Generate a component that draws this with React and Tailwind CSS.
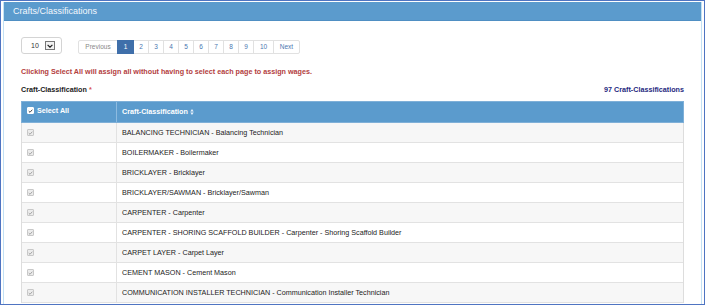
import React from "react";

const rows = [
  "BALANCING TECHNICIAN - Balancing Technician",
  "BOILERMAKER - Boilermaker",
  "BRICKLAYER - Bricklayer",
  "BRICKLAYER/SAWMAN - Bricklayer/Sawman",
  "CARPENTER - Carpenter",
  "CARPENTER - SHORING SCAFFOLD BUILDER - Carpenter - Shoring Scaffold Builder",
  "CARPET LAYER - Carpet Layer",
  "CEMENT MASON - Cement Mason",
  "COMMUNICATION INSTALLER TECHNICIAN - Communication Installer Technician",
];

const pages = [
  { label: "Previous", w: "w-[40px]", muted: true },
  { label: "1", w: "w-[17px]", active: true },
  { label: "2", w: "w-[16px]" },
  { label: "3", w: "w-[16px]" },
  { label: "4", w: "w-[16px]" },
  { label: "5", w: "w-[16px]" },
  { label: "6", w: "w-[16px]" },
  { label: "7", w: "w-[16px]" },
  { label: "8", w: "w-[16px]" },
  { label: "9", w: "w-[16px]" },
  { label: "10", w: "w-[21px]" },
  { label: "Next", w: "w-[27px]" },
];

function Check({ light }) {
  return (
    <span
      className={`flex items-center justify-center w-[7px] h-[7px] rounded-[1px] border ${
        light ? "border-[#c8c8c8] bg-[#ececec]" : "border-white bg-white"
      }`}
    >
      <svg width="6" height="6" viewBox="0 0 10 10">
        <path d="M1.5 5.2 L4 7.6 L8.6 2.4" fill="none" stroke={light ? "#9a9a9a" : "#333"} strokeWidth="1.8" />
      </svg>
    </span>
  );
}

export default function App() {
  return (
    <div className="w-[705px] h-[305px] overflow-hidden bg-white border border-[#4f74c2] font-['Liberation_Sans',Arial,sans-serif]">
      <div className="mx-[2px] mt-[1px] h-[320px] border-x border-[#c3e1f4] bg-white">
        {/* PANEL HEADER */}
        <div className="h-[19px] bg-[#5b9bcd] border-b border-[#4f8fc3] flex items-center pl-[9px]">
          <span className="text-[#f4f8fc] text-[9px] leading-none">Crafts/Classifications</span>
        </div>

        <div className="px-[17px] pt-[16px]">
          {/* PAGE SIZE + PAGINATION */}
          <div className="flex items-start">
            <div className="w-[41px] h-[17px] rounded-[3px] border border-[#d4d4d4] flex items-center pl-[9px] gap-[6px]">
              <span className="text-[7px] text-[#333] leading-none">10</span>
              <span className="w-[10px] h-[9px] border border-[#777] bg-[#f2f2f2] flex items-center justify-center">
                <svg width="6" height="4" viewBox="0 0 10 6">
                  <path d="M1 1 L5 5 L9 1" fill="none" stroke="#222" strokeWidth="2" />
                </svg>
              </span>
            </div>
            <div className="ml-[16px] mt-[3px] flex">
              {pages.map((p, i) => (
                <span
                  key={p.label}
                  className={`${p.w} h-[14px] flex items-center justify-center text-[6.5px] leading-none border ${
                    i > 0 ? "-ml-px" : "rounded-l-[2px]"
                  } ${i === pages.length - 1 ? "rounded-r-[2px]" : ""} ${
                    p.active
                      ? "bg-[#3f6faa] border-[#3f6faa] text-white relative"
                      : p.muted
                      ? "border-[#e1e1e1] text-[#888] bg-white"
                      : "border-[#e1e1e1] text-[#4a76b0] bg-white"
                  }`}
                >
                  {p.label}
                </span>
              ))}
            </div>
          </div>

          {/* WARNING */}
          <p className="mt-[13px] h-[9px] leading-[9px] text-[7.2px] font-bold text-[#b3403e]">
            Clicking Select All will assign all without having to select each page to assign wages.
          </p>

          {/* LABEL ROW */}
          <div className="mt-[7px] h-[10px] flex items-end justify-between">
            <span className="text-[7.2px] font-bold text-[#222] leading-none">
              Craft-Classification <span className="text-[#d9534f]">*</span>
            </span>
            <span className="text-[7.2px] font-bold text-[#25287e] leading-none">97 Craft-Classifications</span>
          </div>

          {/* TABLE */}
          <div className="mt-[8px] border-x border-[#dddddd]">
            <div className="h-[22px] flex bg-[#5b9bcd] border border-[#7fb0d8] -mx-px text-white text-[7.2px] font-bold">
              <div className="w-[95px] border-r border-[#8dbbe0] flex items-start pt-[5px] pl-[5px] gap-[3px]">
                <Check />
                <span className="leading-[8px]">Select All</span>
              </div>
              <div className="flex-1 flex items-center pl-[5px] gap-[2px]">
                <span className="leading-none">Craft-Classification</span>
                <svg width="4" height="6" viewBox="0 0 4 7">
                  <path d="M2 0 L4 3 L0 3 Z M0 4 L4 4 L2 7 Z" fill="#e8f1fa" />
                </svg>
              </div>
            </div>
            {rows.map((r, i) => (
              <div
                key={r}
                className={`h-[20px] flex border-b border-[#e2e2e2] ${i % 2 === 0 ? "bg-[#f7f7f7]" : "bg-white"}`}
              >
                <div className="w-[95px] border-r border-[#e2e2e2] flex items-center pl-[5px]">
                  <Check light />
                </div>
                <div className="flex-1 flex items-center pl-[5px] text-[7.2px] text-[#222] leading-none">{r}</div>
              </div>
            ))}
          </div>
        </div>
      </div>
    </div>
  );
}
